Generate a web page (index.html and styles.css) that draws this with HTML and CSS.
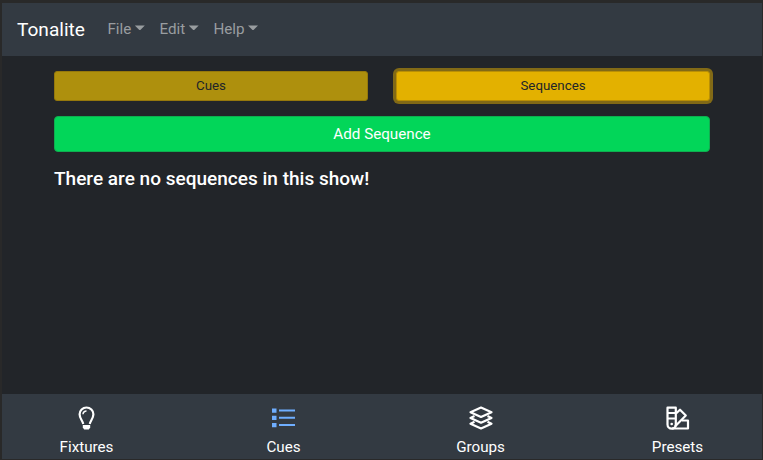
FILE: index.html
```html
<!DOCTYPE html>
<html lang="en">
<head>
<meta charset="utf-8">
<title>Tonalite</title>
<link rel="stylesheet" href="styles.css">
</head>
<body>
<div class="app">
  <nav class="navbar">
    <a class="brand">Tonalite</a>
    <a class="menu">File<span class="caret"></span></a>
    <a class="menu">Edit<span class="caret"></span></a>
    <a class="menu">Help<span class="caret"></span></a>
  </nav>
  <main class="content">
    <div class="switcher">
      <button class="btn btn-small">Cues</button>
      <button class="btn btn-small active">Sequences</button>
    </div>
    <button class="btn btn-add">Add Sequence</button>
    <h5 class="message">There are no sequences in this show!</h5>
  </main>
  <footer class="tabs">
    <a class="tab">
      <svg class="icon" viewBox="0 0 26 26" fill="none" stroke="currentColor" stroke-width="2.200">
        <path d="M9.200 19C8.700 15.500 5.600 13.500 5.600 9.200a6.900 6.700 0 0 1 13.800 0C19.400 13.500 16.300 15.500 15.800 19"/>
        <path d="M9 9.300A3.400 3.400 0 0 1 12.500 5.900" stroke-width="1.500"/>
        <path d="M8.800 20h7.400v2.400l-1.400 2.200h-4.600L8.800 22.400z" fill="currentColor" stroke="none"/>
      </svg>
      <span>Fixtures</span>
    </a>
    <a class="tab">
      <svg class="icon blue" viewBox="0 0 26 26" fill="currentColor">
        <path d="M1 3.500h4.500v4.200H1zM1 10.700h4.500v4.200H1zM1 18h4.500v4.200H1zM8 4.600h16v2H8zM8 11.800h16v2H8zM8 19h16v2H8z"/>
      </svg>
      <span>Cues</span>
    </a>
    <a class="tab">
      <svg class="icon" viewBox="0 0 26 26" fill="none" stroke="currentColor" stroke-width="2.200" stroke-linejoin="round">
        <path d="M13 2.600 23.500 7.300 13 12 2.500 7.300z"/>
        <path d="M6.500 11 2.500 13 13 17.700 23.500 13 19.500 11"/>
        <path d="M6.500 16.700 2.500 18.700 13 23.400 23.500 18.700 19.500 16.700"/>
      </svg>
      <span>Groups</span>
    </a>
    <a class="tab">
      <svg class="icon" viewBox="0 0 26 26" fill="none" stroke="currentColor" stroke-width="2.200" stroke-linejoin="round">
        <path d="M2.500 2.700h8.300v16.800a4.150 4.150 0 0 1-8.300 0z"/>
        <path d="M3 8h8M3 13.500h8" stroke-width="1.800"/>
        <path d="M11 8.500 15 4.700 20.800 10.500 10 21.500"/>
        <path d="M17 15.500H23V23.500H7"/>
        <circle cx="6.700" cy="19" r="1.300" fill="currentColor" stroke="none"/>
      </svg>
      <span>Presets</span>
    </a>
  </footer>
</div>
</body>
</html>
```
FILE: styles.css
```css
* { box-sizing: border-box; }
body {
  margin: 0;
  height: 460px;
  padding: 3px 1px 1px 2px;
  background: #292929;
  color: #fff;
  font: 15.2px/1.5 Roboto, sans-serif;
}
.app {
  height: 456px;
  display: flex;
  flex-direction: column;
  background: #222529;
}
.navbar {
  height: 53px;
  display: flex;
  align-items: center;
  padding: 0 15px;
  background: #333a42;
}
.brand { font-size: 19.100px; margin-right: 22.500px; padding-top: 1px; }
.menu {
  display: flex;
  align-items: center;
  color: #999da0;
  margin-right: 14.700px;
}
.caret {
  margin-left: 3.500px;
  margin-top: -3px;
  width: 10px;
  height: 5px;
  background: currentColor;
  clip-path: polygon(0 0, 100% 0, 50% 100%);
}
.content { flex: 1; padding: 15px 52px 0; }
.switcher { display: flex; gap: 28px; }
.btn {
  display: block;
  font: inherit;
  border: 1px solid #0fae50;
  border-radius: 4px;
  padding: 0;
}
.btn-small {
  flex: 1;
  height: 30px;
  border-radius: 3px;
  font-size: 13.300px;
  color: #212529;
  background: #ae900d;
  border-color: #95780c;
}
.btn-small.active {
  background: #e3b100;
  border-color: #b98f05;
  box-shadow: 0 0 0 3px #826a16;
}
.btn-add {
  width: 100%;
  height: 36px;
  margin-top: 15px;
  color: #fff;
  background: #02d659;
}
.message {
  margin: 15px 0 0;
  font-size: 19.050px;
  font-weight: 500;
  line-height: 23px;
}
.tabs {
  height: 65px;
  display: flex;
  justify-content: space-between;
  background: #333a42;
}
.tab {
  width: 169px;
  display: flex;
  flex-direction: column;
  align-items: center;
  padding-top: 11px;
}
.tab span { margin-top: 5px; line-height: 23px; }
.icon { width: 26px; height: 26px; display: block; }
.blue { color: #6faeff; }
```
